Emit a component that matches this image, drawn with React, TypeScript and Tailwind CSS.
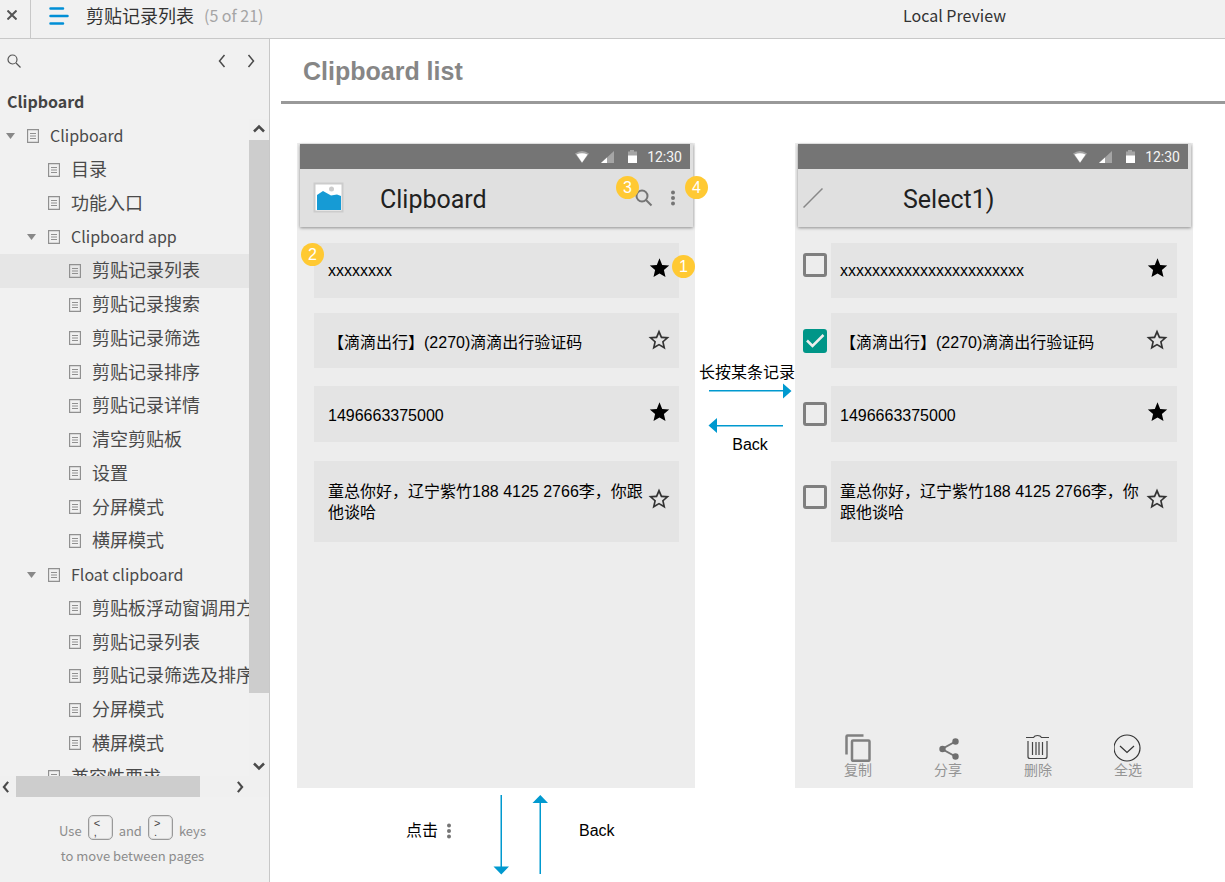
import { useState } from "react";

type TreeItem = { label: string; level: 0 | 1 | 2; open?: boolean; latin?: boolean; current?: boolean };

const tree: TreeItem[] = [
  { label: "Clipboard", level: 0, open: true, latin: true },
  { label: "目录", level: 1 },
  { label: "功能入口", level: 1 },
  { label: "Clipboard app", level: 1, open: true, latin: true },
  { label: "剪贴记录列表", level: 2, current: true },
  { label: "剪贴记录搜索", level: 2 },
  { label: "剪贴记录筛选", level: 2 },
  { label: "剪贴记录排序", level: 2 },
  { label: "剪贴记录详情", level: 2 },
  { label: "清空剪贴板", level: 2 },
  { label: "设置", level: 2 },
  { label: "分屏模式", level: 2 },
  { label: "横屏模式", level: 2 },
  { label: "Float clipboard", level: 1, open: true, latin: true },
  { label: "剪贴板浮动窗调用方式", level: 2 },
  { label: "剪贴记录列表", level: 2 },
  { label: "剪贴记录筛选及排序", level: 2 },
  { label: "分屏模式", level: 2 },
  { label: "横屏模式", level: 2 },
  { label: "兼容性要求", level: 1 },
];

const indent = ["pl-[6px]", "pl-[27px]", "pl-[48px]"];

function Chevron({ dir, className }: { dir: "left" | "right" | "up" | "down"; className: string }) {
  const d = {
    left: "M8.5 1 3.5 7l5 6",
    right: "M3.5 1l5 6-5 6",
    up: "M1 9.5 6 4.500l5 5",
    down: "M1 4.500l5 5 5-5",
  }[dir];
  return (
    <svg viewBox="0 0 12 14" className={className} fill="none" stroke="currentColor" aria-hidden="true">
      <path d={d} />
    </svg>
  );
}

function PageIcon() {
  return (
    <svg viewBox="0 0 12 14" className="h-[14px] w-[12px] shrink-0" fill="none" stroke="#909090" aria-hidden="true">
      <path d="M.5.5h11v13H.5z" strokeWidth="1.300" />
      <path d="M3 4.500h6M3 7h6M3 9.500h6" />
    </svg>
  );
}

function TreeRow({ item }: { item: TreeItem }) {
  return (
    <li className={item.current ? "bg-[#e6e6e6]" : ""}>
      <a href="#" className={`flex h-full items-center whitespace-nowrap ${indent[item.level]}`}>
        <svg viewBox="0 0 10 6" className="h-[6px] w-[10px] shrink-0" fill="#888" aria-hidden="true">
          {item.open && <path d="M0 0h9L4.500 6z" />}
        </svg>
        <span className="ml-[11px] flex items-center gap-[11px]">
          <PageIcon />
          <span className={item.latin ? "pb-[2px] text-[16px]" : "pb-[2px] text-[18px]"}>{item.label}</span>
        </span>
      </a>
    </li>
  );
}

function Sidebar() {
  return (
    <aside className="flex w-[270px] shrink-0 flex-col border-r border-[#c8c8c8] bg-[#f1f1f1] text-[#4a4a4a]">
      <div className="flex h-[44px] items-center pr-[12px] pl-[7px]">
        <button aria-label="Search" className="mr-auto">
          <svg viewBox="0 0 14 14" className="size-[14px]" fill="none" stroke="#555" strokeWidth="1.200">
            <circle cx="5.500" cy="5.500" r="4.500" />
            <path d="m9 9 4.500 4.500" />
          </svg>
        </button>
        <button aria-label="Previous page">
          <Chevron dir="left" className="h-[14px] w-[12px] stroke-[1.500]" />
        </button>
        <button aria-label="Next page" className="ml-[17px]">
          <Chevron dir="right" className="h-[14px] w-[12px] stroke-[1.500]" />
        </button>
      </div>
      <h2 className="h-[36px] pl-[7px] text-[16px] leading-[36px] font-bold text-[#444]">Clipboard</h2>
      <div className="flex min-h-0 flex-1">
        <nav className="min-w-0 flex-1 overflow-hidden" aria-label="Pages">
          <ul className="grid h-[675px] auto-rows-fr">
            {tree.map((item, i) => (
              <TreeRow key={i} item={item} />
            ))}
          </ul>
        </nav>
        <div className="flex w-[20px] flex-col items-center bg-[#f0f0f0]">
          <Chevron dir="up" className="mt-[3px] mb-[4px] h-[14px] w-[12px] shrink-0 stroke-[2.500]" />
          <div className="w-full grow-[553] bg-[#cdcdcd]" />
          <div className="grow-[66]" />
          <Chevron dir="down" className="mb-[3px] h-[14px] w-[12px] shrink-0 stroke-[2.500]" />
        </div>
      </div>
      <div className="flex h-[21px] items-center bg-[#f0f0f0] pr-[23px]">
        <Chevron dir="left" className="mr-[4px] h-[12px] w-[12px] shrink-0 stroke-[2.500]" />
        <div className="h-full w-[184px] bg-[#cdcdcd]" />
        <Chevron dir="right" className="ml-auto h-[12px] w-[12px] shrink-0 stroke-[2.500]" />
      </div>
      <div className="flex h-[85px] flex-col items-center pt-[17px] pr-[4px] text-[13px] text-[#8c8c8c]">
        <p className="flex h-[30px] items-center gap-[6px]">
          <span className="pt-1">Use</span>
          <Key top="<" bottom="," />
          <span className="pt-1">and</span>
          <Key top=">" bottom="." />
          <span className="pt-1">keys</span>
        </p>
        <p className="leading-[24px]">to move between pages</p>
      </div>
    </aside>
  );
}

function Key({ top, bottom }: { top: string; bottom: string }) {
  return (
    <kbd className="mb-[4px] flex size-[25px] flex-col rounded-[5px] border border-[#999] pt-[2px] pl-[5px] font-['Liberation_Sans',sans-serif] text-[11px] leading-[10px] text-[#444] shadow-[inset_0_0_0_1px_#dcdcdc]">
      <span className="h-[10px]">{top}</span>
      <span className="h-[10px] leading-[8px]">{bottom}</span>
    </kbd>
  );
}

function Dots() {
  return (
    <svg viewBox="0 0 6 16" className="h-[16px] w-[6px]" fill="#757575" aria-hidden="true">
      <circle cx="3" cy="2.500" r="2" />
      <circle cx="3" cy="8" r="2" />
      <circle cx="3" cy="13.500" r="2" />
    </svg>
  );
}

function Star({ filled }: { filled: boolean }) {
  return (
    <svg viewBox="0 0 24 24" className="size-[24px]" aria-hidden="true">
      {filled ? (
        <path d="M12.500 17.400l6 3.600-1.600-6.900 5.300-4.600-7-.6L12.500 2.300 9.800 8.900l-7 .6 5.300 4.600L6.500 21z" />
      ) : (
        <path
          fill="#333"
          d="M22.500 9.100l-7.500-.7L12 1.500 9 8.400l-7.500.7 5.700 4.900-1.700 7.400 6.500-3.900 6.500 3.900-1.700-7.400zM12 15.700l-4 2.400 1-4.500-3.500-3 4.600-.4L12 5.900l1.900 4.300 4.600.4-3.500 3 1 4.500z"
        />
      )}
    </svg>
  );
}

function StatusBar() {
  return (
    <div className="mr-[3px] flex h-[25px] items-center justify-end bg-[#757575] pt-px pr-[8px] font-['Roboto',sans-serif] text-[14px] text-[#f5f5f5]">
      <svg viewBox="0 0 62 14" className="mr-[10px] mb-px h-[14px] w-[62px]" aria-hidden="true">
        <path d="M0 3.500Q7-1.500 14 3.500L7 13z" fill="#a5a5a5" />
        <path d="M1.500 4.500Q7 2 12.500 4.500L7 12.500z" fill="#fff" />
        <path d="M39 1v12H26z" fill="#a5a5a5" />
        <path d="M32 7.500V13h-6z" fill="#fff" />
        <path d="M53 1.500h2V0h4v1.500h3V13h-9z" fill="#a5a5a5" />
        <path d="M53 5.500h9V13h-9z" fill="#fff" />
      </svg>
      12:30
    </div>
  );
}

function Badge({ n, className }: { n: number; className: string }) {
  return (
    <span
      className={`absolute flex size-[23px] items-center justify-center rounded-full bg-[#ffc933] text-[16px] leading-[23px] text-white ${className}`}
    >
      {n}
    </span>
  );
}

type ClipRecord = { text: string; star: boolean; size: string; cardPad: string; checkOffset: string };

const records: ClipRecord[] = [
  { text: "xxxxxxxx", star: true, size: "h-[55px]", cardPad: "", checkOffset: "mb-[12px]" },
  { text: "【滴滴出行】(2270)滴滴出行验证码", star: false, size: "mt-[15px] h-[55px]", cardPad: "pt-[4px]", checkOffset: "" },
  { text: "1496663375000", star: true, size: "mt-[18px] h-[56px]", cardPad: "pt-[2px]", checkOffset: "" },
  {
    text: "童总你好，辽宁紫竹188 4125 2766李，你跟他谈哈",
    star: false,
    size: "mt-[19px] h-[81px]",
    cardPad: "",
    checkOffset: "mb-[10px]",
  },
];

function Card({ text, star, onStar, pad }: { text: string; star: boolean; onStar: () => void; pad: string }) {
  return (
    <div className={`flex h-full min-w-0 flex-1 items-center bg-[#e4e4e4] pr-[8px] ${pad}`}>
      <p className="min-w-0 flex-1 text-[16px] leading-[21px] text-black">{text}</p>
      <button aria-label="Star" onClick={onStar} className="mb-[6px] shrink-0">
        <Star filled={star} />
      </button>
    </div>
  );
}

function CheckBox({ label, defaultChecked, className }: { label: string; defaultChecked: boolean; className: string }) {
  return (
    <span className={`relative size-[24px] shrink-0 ${className}`}>
      <input
        type="checkbox"
        aria-label={label}
        defaultChecked={defaultChecked}
        className="peer block size-[24px] appearance-none rounded-[3px] border-[3px] border-[#7f7f7f] checked:border-[#009688] checked:bg-[#009688]"
      />
      <svg
        viewBox="0 0 24 24"
        className="pointer-events-none absolute inset-0 hidden size-[24px] peer-checked:block"
        fill="none"
        stroke="#eee"
        strokeWidth="2.500"
        aria-hidden="true"
      >
        <path d="M4 11.500l5.500 5.500L20.500 6" />
      </svg>
    </span>
  );
}

function ListPhone() {
  const [stars, setStars] = useState(records.map((r) => r.star));
  const toggle = (i: number) => setStars(stars.map((s, k) => (k === i ? !s : s)));
  return (
    <section className="relative h-[645px] bg-[#ededed] pt-px">
      <div className="mr-[2px] ml-[3px] bg-[#e0e0e0] shadow-[0_1px_3px_rgba(0,0,0,0.4)]">
        <StatusBar />
        <div className="flex h-[58px] items-center pr-[17px] pl-[13px]">
          <svg viewBox="0 0 32 32" className="size-[32px]" aria-hidden="true">
            <path d="M1.500 1.500h28v28h-28z" fill="#fff" stroke="#ccc" strokeWidth="2" />
            <circle cx="18.500" cy="7" r="2.500" fill="#ccc" />
            <path d="M4 13l6-4 8 4.500 6-1 4 1.500v14H4z" fill="#169bd5" />
          </svg>
          <h3 className="ml-[35px] pt-[4px] font-['Roboto',sans-serif] text-[25px] text-[#212121]">Clipboard</h3>
          <button aria-label="Search" className="mr-[17px] ml-auto">
            <svg viewBox="0 0 18 18" className="size-[18px]" fill="none" stroke="#757575" strokeWidth="2">
              <circle cx="7" cy="7" r="5.500" />
              <path d="m11 11 5.500 5.500" />
            </svg>
          </button>
          <button aria-label="More">
            <Dots />
          </button>
        </div>
      </div>
      <div className="pt-[16px] pr-[16px] pl-[17px]">
        {records.map((r, i) => (
          <div key={i} className={`flex ${r.size}`}>
            <Card text={r.text} star={stars[i]} onStar={() => toggle(i)} pad={`pl-[14px] ${r.cardPad}`} />
          </div>
        ))}
      </div>
      <Badge n={1} className="top-[112px] right-0" />
      <Badge n={2} className="top-[100px] left-[4px]" />
      <Badge n={3} className="top-[33px] right-[56px]" />
      <Badge n={4} className="top-[33px] -right-[13px]" />
    </section>
  );
}

function Tool({ label, children }: { label: string; children: React.ReactNode }) {
  return (
    <button className="flex flex-col items-center text-[14px] leading-[16px] text-[#949494]">
      <svg viewBox="0 0 28 28" className="size-[28px]" fill="none" aria-hidden="true">
        {children}
      </svg>
      {label}
    </button>
  );
}

function SelectPhone() {
  const [stars, setStars] = useState(records.map((r) => r.star));
  const toggle = (i: number) => setStars(stars.map((s, k) => (k === i ? !s : s)));
  return (
    <section className="flex h-[645px] flex-col bg-[#ededed] pt-px">
      <div className="mr-[2px] ml-[3px] bg-[#e0e0e0] shadow-[0_1px_3px_rgba(0,0,0,0.4)]">
        <StatusBar />
        <div className="flex h-[58px] items-center pl-[5px]">
          <svg viewBox="0 0 20 20" className="size-[20px]" stroke="#888" strokeWidth="1.500" aria-hidden="true">
            <path d="M.5 19.500l19-19" />
          </svg>
          <h3 className="ml-[80px] pt-[4px] font-['Roboto',sans-serif] text-[25px] text-[#212121]">Select1)</h3>
        </div>
      </div>
      <div className="pt-[16px] pr-[16px] pl-[8px]">
        {records.map((r, i) => (
          <div key={i} className={`flex items-center gap-[4px] ${r.size}`}>
            <CheckBox label={`Record ${i + 1}`} defaultChecked={i === 1} className={r.checkOffset} />
            <Card
              text={i === 0 ? "xxxxxxxxxxxxxxxxxxxxxxx" : r.text}
              star={stars[i]}
              onStar={() => toggle(i)}
              pad={`pl-[9px] ${r.cardPad}`}
            />
          </div>
        ))}
      </div>
      <div className="mt-auto flex justify-between pr-[51px] pb-[10px] pl-[49px]">
        <Tool label="复制">
          <path d="M2.500 20.500V2.500Q2.500 1.500 3.500 1.500h16" stroke="#808080" strokeWidth="2.500" />
          <rect x="8" y="6.500" width="17.500" height="20.300" rx="1" stroke="#808080" strokeWidth="2.500" />
        </Tool>
        <Tool label="分享">
          <path d="M21.500 7.500 8 15l13.500 7.500" stroke="#757575" strokeWidth="2" />
          <circle cx="21.500" cy="7.500" r="3.200" fill="#6f6f6f" />
          <circle cx="8.500" cy="15" r="3.200" fill="#6f6f6f" />
          <circle cx="21.500" cy="22.500" r="3.200" fill="#6f6f6f" />
        </Tool>
        <Tool label="删除">
          <path
            d="M2 3.500h7.500q1-2 4-2t4 2h7.500M4 7v15.500q0 2 2 2h15q2 0 2-2V7M8.500 8v13M12 8v13M15 8v13M18.500 8v13"
            stroke="#444"
            strokeWidth="1.200"
          />
        </Tool>
        <Tool label="全选">
          <circle cx="13" cy="14" r="13" stroke="#333" strokeWidth="1.200" />
          <path d="M6 12l7 6.500 7-6.500" stroke="#333" strokeWidth="1.200" />
        </Tool>
      </div>
    </section>
  );
}

export default function App() {
  return (
    <div className="flex h-screen flex-col bg-white font-['Noto_Sans_CJK_SC',sans-serif] text-[#333]">
      <header className="flex h-[39px] shrink-0 items-center border-b border-[#c8c8c8] bg-[#f1f1f1]">
        <button aria-label="Close" className="flex h-full w-[31px] items-center border-r border-[#c8c8c8] pb-[8px] pl-[7px]">
          <svg viewBox="0 0 10 10" className="size-[10px]" stroke="#555" strokeWidth="2">
            <path d="m.5.5 9 9m0-9-9 9" />
          </svg>
        </button>
        <button aria-label="Toggle page list" className="ml-[18px] pb-[6px]">
          <svg viewBox="0 0 20 18" className="h-[18px] w-[20px]" stroke="#008fd6" strokeWidth="2.500" strokeLinecap="round">
            <path d="M1.500 1.500h12.500M1.500 9h17M1.500 16.500h12.500" />
          </svg>
        </button>
        <h1 className="ml-[17px] pb-[8px] text-[18px] leading-[30px]">剪贴记录列表</h1>
        <span className="ml-[10px] pb-[8px] text-[16px] leading-[30px] text-[#a5a5a5]">(5 of 21)</span>
        <span className="mr-[219px] ml-auto pb-[8px] text-[16px] leading-[30px]">Local Preview</span>
      </header>
      <div className="flex min-h-0 flex-1">
        <Sidebar />
        <main className="min-w-0 flex-1 overflow-hidden font-['Liberation_Sans','Noto_Sans_CJK_SC',sans-serif] text-[16px] text-black">
          <div className="ml-[11px] border-b-[3px] border-[#999] pl-[22px]">
            <h2 className="h-[62px] text-[25px] leading-[64px] font-bold text-[#868686]">Clipboard list</h2>
          </div>
          <div className="grid grid-cols-[minmax(0,1fr)_100px_minmax(0,1fr)] pt-[39px] pr-[32px] pl-[27px]">
            <ListPhone />
            <div className="flex flex-col items-end pt-[220px]">
              <p className="leading-[20px] whitespace-nowrap">长按某条记录</p>
              <div className="mr-[3px] flex flex-col items-center">
                <svg viewBox="0 0 84 52" className="h-[52px] w-[84px]" fill="#0099cf" aria-hidden="true">
                  <path d="M1 7h74v1.500H1zM75 .5l8.500 7.500-8.500 7.500zM9 42h66v1.500H9zM9 35l-8.500 7.500L9 50z" />
                </svg>
                <p className="leading-[20px]">Back</p>
              </div>
            </div>
            <SelectPhone />
          </div>
          <div className="flex h-[86px] pl-[136px]">
            <p className="flex h-full items-center gap-[8px]">
              点击
              <Dots />
            </p>
            <svg viewBox="0 0 62 80" className="mt-[7px] ml-[41px] h-[80px] w-[62px]" fill="#0099cf" aria-hidden="true">
              <path d="M7.500 0H9v72H7.500zM.5 71.500h15.500L8.300 79.500zM46.500 8H48v71h-1.500zM39.500 8h15.500L47.300 0z" />
            </svg>
            <p className="ml-[24px] flex h-full items-center">Back</p>
          </div>
        </main>
      </div>
    </div>
  );
}
